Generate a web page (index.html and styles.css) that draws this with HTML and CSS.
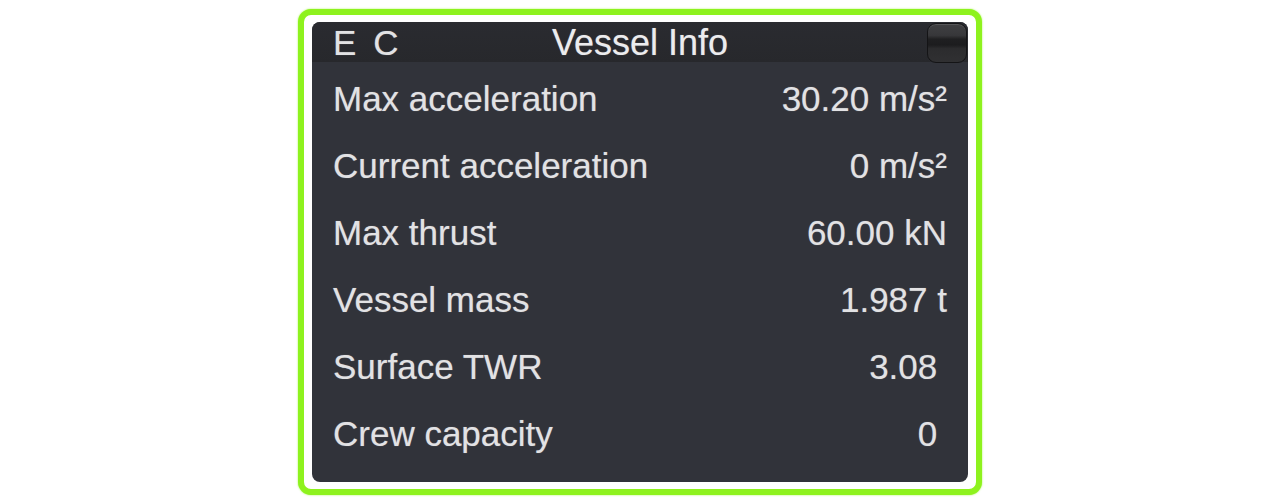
FILE: index.html
```html
<!DOCTYPE html>
<html lang="en">
<head>
<meta charset="utf-8">
<title>Vessel Info</title>
<link rel="stylesheet" href="styles.css">
</head>
<body>
<div class="frame">
  <div class="panel">
    <div class="header">
      <div class="header-left">
        <span class="hbtn">E</span>
        <span class="hbtn">C</span>
      </div>
      <div class="title">Vessel Info</div>
      <div class="header-right">
        <span class="close"></span>
      </div>
    </div>
    <div class="rows">
      <div class="row"><span>Max acceleration</span><span class="val">30.20 m/s²</span></div>
      <div class="row"><span>Current acceleration</span><span class="val">0 m/s²</span></div>
      <div class="row"><span>Max thrust</span><span class="val">60.00 kN</span></div>
      <div class="row"><span>Vessel mass</span><span class="val">1.987 t</span></div>
      <div class="row"><span>Surface TWR</span><span class="val">3.08&nbsp;</span></div>
      <div class="row"><span>Crew capacity</span><span class="val">0&nbsp;</span></div>
    </div>
  </div>
</div>
</body>
</html>
```

FILE: styles.css
```css
html, body {
  margin: 0;
  padding: 0;
  background: #ffffff;
}
body {
  width: 1280px;
  height: 504px;
  display: flex;
  align-items: center;
  justify-content: center;
  font-family: "Liberation Sans", Arial, sans-serif;
}
.frame {
  box-sizing: border-box;
  width: 684px;
  height: 486px;
  border: 6px solid #8ef21e;
  border-radius: 13px;
  padding: 7px 8px;
  background: #ffffff;
  box-shadow: 0 0 2px rgba(142, 242, 30, 0.8);
}
.panel {
  width: 656px;
  height: 460px;
  background: #31333a;
  border-radius: 8px;
  overflow: hidden;
  color: #e2e2e4;
  text-shadow: 0 0 1px rgba(255, 255, 255, 0.4);
}
.header {
  height: 40px;
  background: linear-gradient(#2a2b30, #27282c);
  display: grid;
  grid-template-columns: 1fr auto 1fr;
  align-items: center;
}
.header-left {
  display: flex;
  gap: 17px;
  padding-left: 21px;
  font-size: 35px;
}
.title {
  font-size: 36px;
  color: #ececee;
}
.header-right {
  display: flex;
  justify-content: flex-end;
  align-self: start;
  padding-top: 1px;
  padding-right: 1px;
}
.close {
  box-sizing: border-box;
  width: 40px;
  height: 40px;
  border: 1px solid #141416;
  border-radius: 9px;
  background: linear-gradient(#404042 0%, #37373a 30%, #1f1f21 40%, #1c1c1e 55%, #2c2c2e 65%, #303032 100%);
  box-shadow: inset 0 1px 0 rgba(255, 255, 255, 0.12);
}
.rows {
  padding: 3px 21px 0 21px;
}
.row {
  display: flex;
  justify-content: space-between;
  height: 67px;
  line-height: 67px;
  font-size: 35px;
  white-space: pre;
}
```
